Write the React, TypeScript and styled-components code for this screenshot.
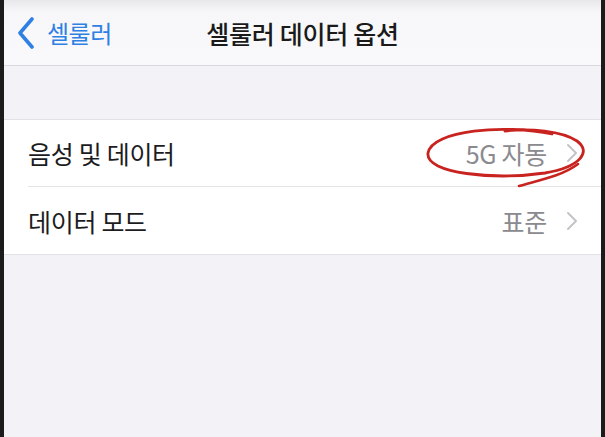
import React from "react";
import styled, { createGlobalStyle } from "styled-components";

const Global = createGlobalStyle`
  html, body { margin: 0; padding: 0; background: #1b1b1b; }
  * { box-sizing: border-box; }
`;

const Frame = styled.div`
  width: 605px;
  height: 437px;
  background: #1b1b1b;
  padding: 0 4px 0 4px;
  display: flex;
`;

const Screen = styled.div`
  position: relative;
  flex: 1;
  background: #f2f2f7;
  display: flex;
  flex-direction: column;
  font-family: "Noto Sans CJK KR", "Noto Sans", sans-serif;
`;

const NavBar = styled.div`
  height: 66px;
  background: linear-gradient(#e8e8ea 0px, #f7f7f9 12px, #f9f9fb 100%);
  border-bottom: 1px solid #d9d9dd;
  display: grid;
  grid-template-columns: 1fr auto 1fr;
  align-items: center;
  padding: 0 12px;
`;

const Back = styled.div`
  display: flex;
  align-items: center;
  gap: 11px;
  color: #2f80e4;
  font-size: 24px;
  letter-spacing: -0.5px;
`;

const Title = styled.div`
  font-size: 25px;
  font-weight: 500;
  color: #1a1a1a;
  letter-spacing: -0.3px;
  margin-top: 1px;
`;

const Spacer = styled.div`
  height: 53px;
`;

const Group = styled.div`
  background: #ffffff;
  border-top: 1px solid #e2e2e6;
  border-bottom: 1px solid #e2e2e6;
`;

const Row = styled.div<{ $sep?: boolean }>`
  height: 67px;
  display: flex;
  align-items: center;
  margin-left: 24px;
  padding-right: 22px;
  border-bottom: ${(p) => (p.$sep ? "1px solid #e4e4e7" : "none")};
`;

const Label = styled.div`
  flex: 1;
  font-size: 25px;
  color: #1c1c1e;
  letter-spacing: -0.3px;
`;

const Value = styled.div`
  font-size: 25px;
  color: #8a8a8f;
  letter-spacing: -0.3px;
  margin-right: 18px;
`;

const Annotation = styled.svg`
  position: absolute;
  left: -4px;
  top: 0;
  pointer-events: none;
`;

const Chevron = () => (
  <svg width="14" height="20" viewBox="0 0 14 20">
    <path d="M3 2 L11 10 L3 18" fill="none" stroke="#c4c4c8" strokeWidth="2" strokeLinecap="round" strokeLinejoin="round" />
  </svg>
);

const BackChevron = () => (
  <svg width="20" height="32" viewBox="0 0 20 32">
    <path d="M16 2 L4 16 L16 30" fill="none" stroke="#2f80e4" strokeWidth="3.6" strokeLinecap="round" strokeLinejoin="round" />
  </svg>
);

export default function App() {
  return (
    <>
      <Global />
      <Frame>
        <Screen>
          <NavBar>
            <Back>
              <BackChevron />
              <span>셀룰러</span>
            </Back>
            <Title>셀룰러 데이터 옵션</Title>
            <div />
          </NavBar>
          <Spacer />
          <Group>
            <Row $sep>
              <Label>음성 및 데이터</Label>
              <Value>5G 자동</Value>
              <Chevron />
            </Row>
            <Row>
              <Label>데이터 모드</Label>
              <Value>표준</Value>
              <Chevron />
            </Row>
          </Group>
          <Annotation width="605" height="437" viewBox="0 0 605 437">
            <path
              d="M552 134 C505 124 432 130 428 153 C425 174 495 180 545 173 C580 167 592 152 577 141 C562 131 530 128 505 131"
              fill="none"
              stroke="#c8231f"
              strokeWidth="2.8"
              strokeLinecap="round"
            />
            <path
              d="M519 186 C540 180 562 176 578 164"
              fill="none"
              stroke="#c8231f"
              strokeWidth="2.6"
              strokeLinecap="round"
            />
          </Annotation>
        </Screen>
      </Frame>
    </>
  );
}
